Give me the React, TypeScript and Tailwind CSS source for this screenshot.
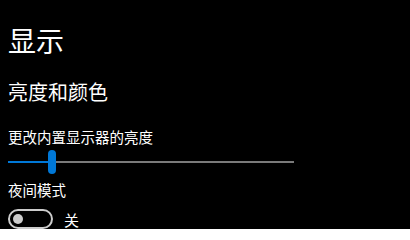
import { useState } from 'react'

export default function App() {
  const [brightness] = useState(14)

  return (
    <div
      className="flex h-[229px] w-[410px] flex-col overflow-hidden bg-black pl-2 text-white"
      style={{ fontFamily: '"Noto Sans CJK SC", "Noto Sans", sans-serif' }}
    >
      <h1 className="pt-[26px] text-[28px] leading-[28px] font-normal">显示</h1>
      <h2 className="mt-[28px] text-[20px] leading-[20px] font-normal">亮度和颜色</h2>
      <p className="mt-[27px] text-[14.5px] leading-[15px]">更改内置显示器的亮度</p>

      {/* brightness slider */}
      <div className="mt-[6px] flex h-[24px] w-[286px] items-center">
        <div className="h-[2px] bg-[#0078d7]" style={{ width: `${brightness}%` }} />
        <div className="h-[24px] w-[8px] shrink-0 rounded-full bg-[#0078d7]" />
        <div className="h-[2px] flex-1 bg-[#7a7a7a]" />
      </div>

      <p className="mt-[8px] text-[14.5px] leading-[15px]">夜间模式</p>

      <div className="mt-[12px] flex items-center gap-[11px]">
        <div className="flex h-[20px] w-[45px] items-center rounded-full border-2 border-[#cccccc] px-[3px]">
          <div className="h-[10px] w-[10px] rounded-full bg-[#cccccc]" />
        </div>
        <span className="text-[15px] leading-[15px]">关</span>
      </div>
    </div>
  )
}
